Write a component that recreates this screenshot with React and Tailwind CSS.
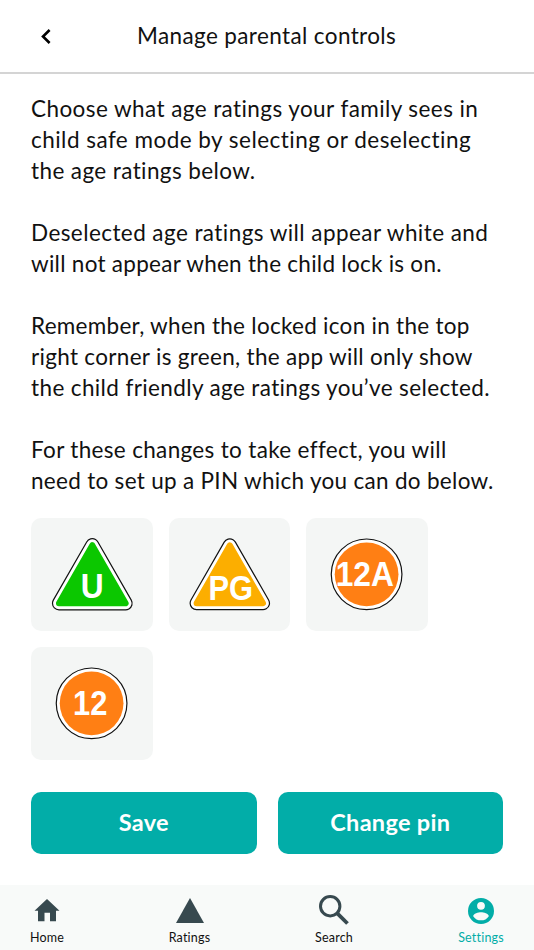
import { useState } from 'react';

const paragraphs = [
  [
    { text: 'Choose what age ratings your family sees in', tracking: 'tracking-[0.42px]' },
    { text: 'child safe mode by selecting or deselecting', tracking: 'tracking-[0.47px]' },
    { text: 'the age ratings below.', tracking: 'tracking-[0.4px]' },
  ],
  [
    { text: 'Deselected age ratings will appear white and', tracking: 'tracking-[0.43px]' },
    { text: 'will not appear when the child lock is on.', tracking: 'tracking-[0.27px]' },
  ],
  [
    { text: 'Remember, when the locked icon in the top', tracking: 'tracking-[0.28px]' },
    { text: 'right corner is green, the app will only show', tracking: 'tracking-[0.31px]' },
    { text: 'the child friendly age ratings you’ve selected.', tracking: 'tracking-[0.38px]' },
  ],
  [
    { text: 'For these changes to take effect, you will', tracking: 'tracking-[0.33px]' },
    { text: 'need to set up a PIN which you can do below.', tracking: 'tracking-[0.3px]' },
  ],
];

const ratings = [
  { label: 'U', shape: 'triangle', color: '#0bc700', x: 49.8, y: 80.4, width: 23 },
  { label: 'PG', shape: 'triangle', color: '#fcae00', x: 39.8, y: 82.4, width: 45 },
  { label: '12A', shape: 'circle', color: '#ff7f14', x: 29.5, y: 68.4, width: 58.5 },
  { label: '12', shape: 'circle', color: '#ff7f14', x: 42, y: 68.4, width: 34.5 },
];

const RatingSign = ({ rating }) => {
  const triangle = 'M61.3 27.3L94.8 85.7H27.8Z';
  return (
    <svg className="block h-full w-full" viewBox="0 0 122 114">
      {rating.shape === 'triangle' ? (
        <g strokeLinejoin="round">
          <path d={triangle} fill="#111" stroke="#111" strokeWidth="14.2" />
          <path d={triangle} fill="#fff" stroke="#fff" strokeWidth="11.8" />
          <path d={triangle} fill={rating.color} stroke={rating.color} strokeWidth="6" />
        </g>
      ) : (
        <g>
          <circle cx="60.6" cy="56.6" r="35.5" fill="#fff" stroke="#111" strokeWidth="1.2" />
          <circle cx="60.6" cy="56.6" r="32" fill={rating.color} />
        </g>
      )}
      <text
        className="font-['Liberation_Sans',sans-serif] text-[36px] font-bold"
        x={rating.x}
        y={rating.y}
        fill="#fff"
        textLength={rating.width}
        lengthAdjust="spacingAndGlyphs"
      >
        {rating.label}
      </text>
    </svg>
  );
};

const HomeIcon = () => (
  <svg width="26" height="23" viewBox="0 0 26 23" fill="currentColor">
    <path d="M13 0L25.5 11.7H22V22.3H16V13.8H10.5V22.3H4V11.7H.5Z" />
  </svg>
);

const RatingsIcon = () => (
  <svg width="28" height="25" viewBox="0 0 28 25" fill="currentColor">
    <path d="M14 0L28 25H0Z" />
  </svg>
);

const SearchIcon = () => (
  <svg width="30" height="30" viewBox="0 0 30 30" fill="none" stroke="currentColor">
    <circle cx="11.2" cy="11.2" r="9.7" strokeWidth="3" />
    <path d="M18.3 18.3L28.5 28.5" strokeWidth="3.8" />
  </svg>
);

const SettingsIcon = () => (
  <svg width="26" height="26" viewBox="2 2 20 20" fill="currentColor">
    <path
      fillRule="evenodd"
      d="M12 2a10 10 0 1 0 0 20a10 10 0 0 0 0-20zm0 3a3 3 0 1 1 0 6a3 3 0 0 1 0-6zm0 14.2a7.2 7.2 0 0 1-6-3.22c.03-1.99 4-3.08 6-3.08s5.97 1.09 6 3.08a7.2 7.2 0 0 1-6 3.22z"
    />
  </svg>
);

const tabs = [
  { name: 'Home', icon: HomeIcon, pad: 'pb-[3px]', box: 'ml-[17px] w-[60px]' },
  { name: 'Ratings', icon: RatingsIcon, pad: 'pb-[2px]', box: 'ml-[82.5px] w-[60px]' },
  { name: 'Search', icon: SearchIcon, pad: 'pb-0', box: 'ml-[84.5px] w-[60px]' },
  { name: 'Settings', icon: SettingsIcon, pad: 'pb-[1px]', box: 'ml-[87px] w-[60px]' },
];

const App = () => {
  const [activeTab, setActiveTab] = useState('Settings');

  return (
    <div className="flex h-[950px] w-[534px] flex-col overflow-hidden bg-white font-['Lato',sans-serif] text-[#111]">
      <header className="flex h-[74px] shrink-0 items-start border-b-2 border-[#d4d4d4] pt-[20px]">
        <button className="ml-[40px] mt-[9px] w-[12px]" aria-label="Back">
          <svg width="12" height="15" viewBox="0 0 12 15" fill="none" stroke="#000" strokeWidth="2.6">
            <path d="M9.6 1L3 7.5L9.6 14" />
          </svg>
        </button>
        <h1 className="ml-[85px] whitespace-nowrap text-[22.5px] leading-[31px] tracking-[0.38px]">
          Manage parental controls
        </h1>
      </header>

      <main className="grow px-[31px] pt-[19px]">
        <div className="flex flex-col gap-[31px] text-[22.5px] leading-[31px]">
          {paragraphs.map((lines, i) => (
            <p key={i}>
              {lines.map((line) => (
                <span key={line.text} className={`block whitespace-nowrap ${line.tracking}`}>
                  {line.text}
                </span>
              ))}
            </p>
          ))}
        </div>

        <div className="mt-[21.5px] grid grid-cols-[122px_121px_122px] gap-x-[16px] gap-y-[15.5px]">
          {ratings.map((rating) => (
            <button key={rating.label} className="h-[113.5px] rounded-[10px] bg-[#f4f6f5]">
              <RatingSign rating={rating} />
            </button>
          ))}
        </div>

        <div className="mt-[32px] grid grid-cols-2 gap-[21px]">
          <button className="h-[62px] rounded-[10px] bg-[#02ada8] pb-[1px] text-[23.5px] font-bold tracking-[0.3px] text-white">
            Save
          </button>
          <button className="h-[62px] rounded-[10px] bg-[#02ada8] pb-[1px] text-[23.5px] font-bold tracking-[0.3px] text-white">
            Change pin
          </button>
        </div>
      </main>

      <nav className="flex h-[65px] shrink-0 bg-[#f8faf9]">
        {tabs.map(({ name, icon: Icon, pad, box }) => (
          <button
            key={name}
            className={`flex flex-col items-center ${box} ${activeTab === name ? 'text-[#02ada8]' : 'text-[#111]'}`}
            onClick={() => setActiveTab(name)}
          >
            <span
              className={`flex h-[40px] items-end ${pad} ${activeTab === name ? 'text-[#02ada8]' : 'text-[#37494f]'}`}
            >
              <Icon />
            </span>
            <span className="mt-[5px] text-[12.5px] leading-[16px] tracking-[0.2px]">{name}</span>
          </button>
        ))}
      </nav>
    </div>
  );
};

export default App;
